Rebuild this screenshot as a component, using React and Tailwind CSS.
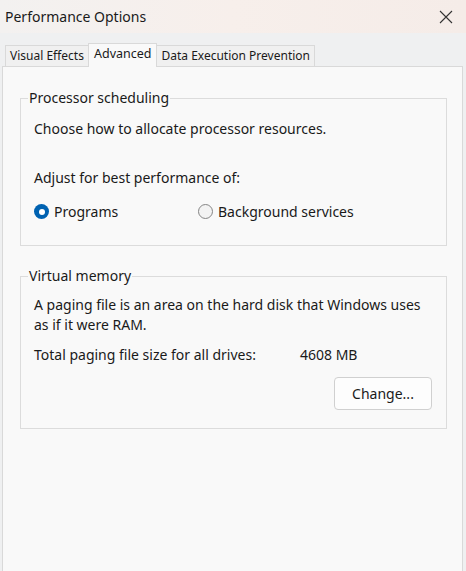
import React, { useState } from 'react';

const font = { fontFamily: '"Noto Sans", "Segoe UI", sans-serif' };

function Radio({ checked, label, onClick }) {
    return (
        <button type="button" onClick={onClick} className="flex items-center gap-[5px] text-[14px] text-[#1a1a1a]">
            {checked ? (
                <span className="w-[15px] h-[15px] rounded-full bg-[#0062b1] flex items-center justify-center">
                    <span className="w-[6px] h-[6px] rounded-full bg-white" />
                </span>
            ) : (
                <span className="w-[15px] h-[15px] rounded-full border border-[#858585] bg-[#f3f3f3]" />
            )}
            <span>{label}</span>
        </button>
    );
}

function GroupBox({ title, children, className }) {
    return (
        <fieldset className={`border border-[#dcdcdc] px-[13px] ${className}`}>
            <legend className="ml-[-6px] px-[1px] text-[14px] leading-[18px] text-[#1a1a1a]">{title}</legend>
            {children}
        </fieldset>
    );
}

export default function App() {
    const [mode, setMode] = useState('programs');
    const [tab, setTab] = useState('Advanced');
    const tabs = ['Visual Effects', 'Advanced', 'Data Execution Prevention'];

    return (
        <div style={font} className="w-[466px] h-[571px] bg-[#eff0f1] flex flex-col overflow-hidden">
            {/* Title bar */}
            <div className="h-[33px] flex items-center justify-between pl-[5px] pr-[10px] bg-gradient-to-r from-[#f3f1f0] via-[#f7efeb] to-[#f5ece8]">
                <span className="text-[14px] text-[#1a1a1a]">Performance Options</span>
                <svg width="14" height="14" viewBox="0 0 14 14" className="mr-[3px]">
                    <path d="M1 1 L13 13 M13 1 L1 13" stroke="#333" strokeWidth="1.1" />
                </svg>
            </div>

            {/* Tabs */}
            <div className="flex items-end pl-[5px] h-[33px]">
                {tabs.map((t) => {
                    const active = t === tab;
                    return (
                        <button
                            key={t}
                            onClick={() => setTab(t)}
                            className={
                                active
                                    ? 'h-[24px] px-[5px] mb-[-1px] z-10 bg-[#f9f9f9] border border-b-0 border-[#d9d9d9] text-[12.5px] text-[#1a1a1a] leading-[20px] pb-[3px]'
                                    : 'h-[21px] px-[4px] bg-[#f0f0f0] border border-b-0 border-[#d9d9d9] text-[12px] text-[#1a1a1a] leading-[20px] -mx-[1px] first:ml-0'
                            }
                        >
                            {t}
                        </button>
                    );
                })}
            </div>

            {/* Panel */}
            <div className="flex-1 ml-[2px] mr-[3px] border border-[#d9d9d9] border-b-0 bg-[#f9f9f9] pl-[17px] pr-[15px] pt-[22px]">
                <GroupBox title="Processor scheduling" className="pb-[23px]">
                    <p className="text-[14px] text-[#1a1a1a] mt-[11px]">Choose how to allocate processor resources.</p>
                    <p className="text-[14px] text-[#1a1a1a] mt-[28px]">Adjust for best performance of:</p>
                    <div className="flex mt-[13px]">
                        <div className="w-[164px]">
                            <Radio checked={mode === 'programs'} label="Programs" onClick={() => setMode('programs')} />
                        </div>
                        <Radio checked={mode === 'background'} label="Background services" onClick={() => setMode('background')} />
                    </div>
                </GroupBox>

                <GroupBox title="Virtual memory" className="mt-[21px] pb-[18px]">
                    <p className="text-[14px] leading-[20px] text-[#1a1a1a] mt-[10px]">
                        A paging file is an area on the hard disk that Windows uses
                        <br />
                        as if it were RAM.
                    </p>
                    <div className="flex text-[14px] text-[#1a1a1a] mt-[9px]">
                        <span className="w-[266px]">Total paging file size for all drives:</span>
                        <span>4608 MB</span>
                    </div>
                    <div className="flex justify-end mt-[12px] pr-[1px]">
                        <button className="w-[98px] h-[33px] rounded-[4px] border border-[#d0d0d0] bg-[#fdfdfd] text-[14px] text-[#1a1a1a]">
                            Change...
                        </button>
                    </div>
                </GroupBox>
            </div>
        </div>
    );
}
